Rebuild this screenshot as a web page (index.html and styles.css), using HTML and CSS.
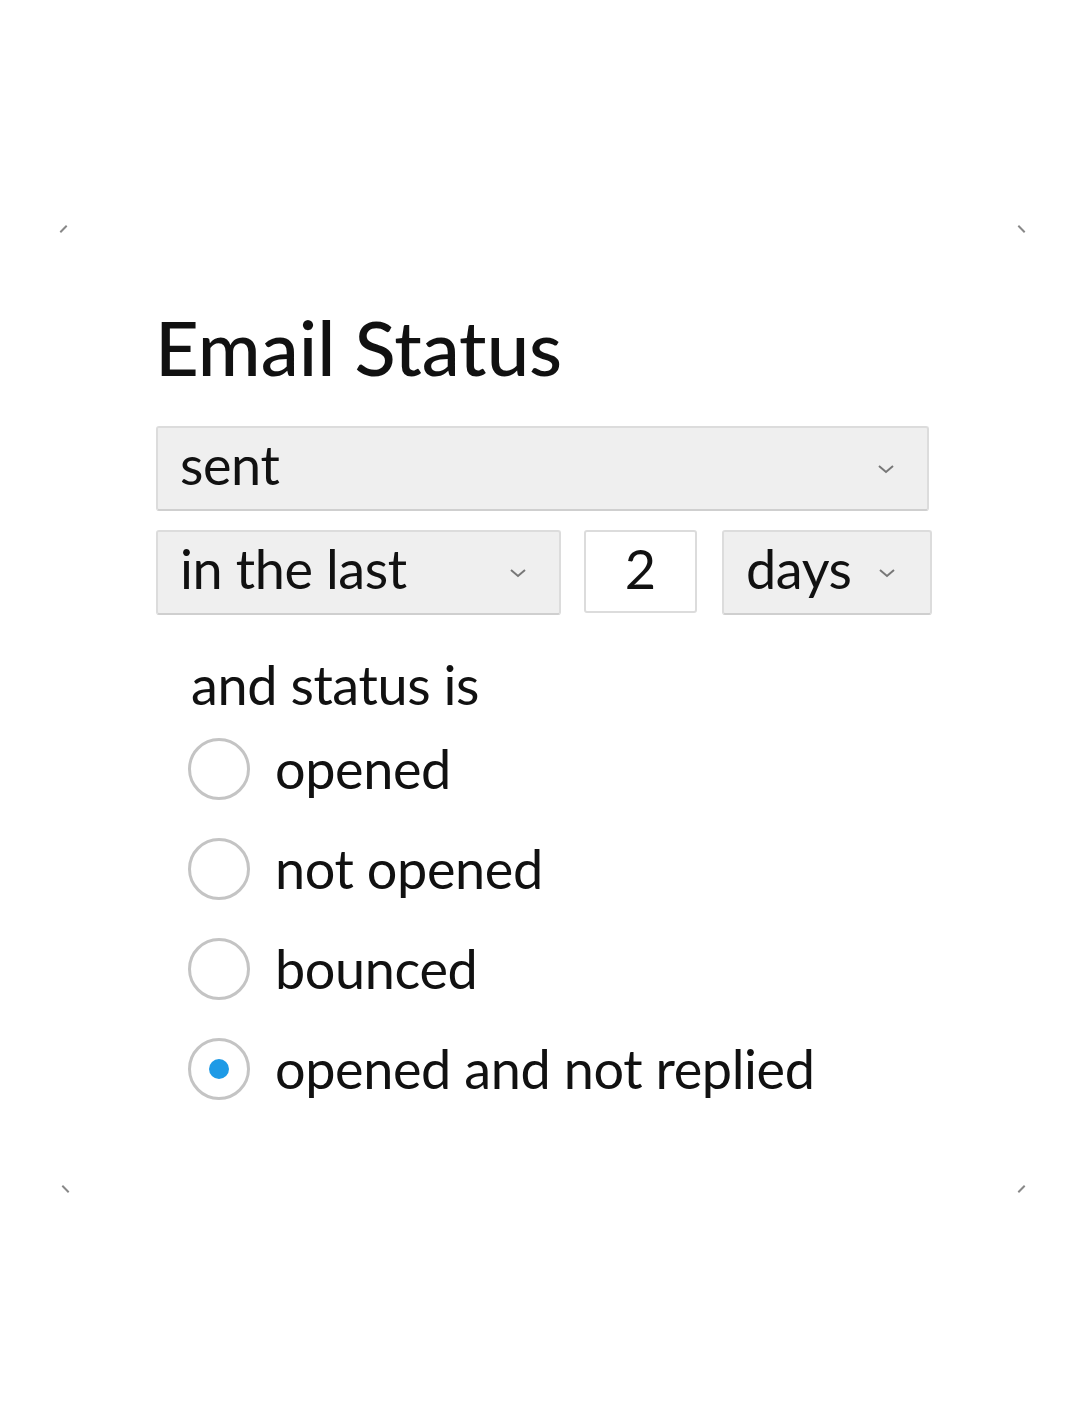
FILE: index.html
```html
<!DOCTYPE html>
<html lang="en">
<head>
  <meta charset="UTF-8">
  <title>Email Status</title>
  <link rel="stylesheet" href="styles.css">
</head>
<body>
  <div class="card">
    <span class="corner tl"></span>
    <span class="corner tr"></span>
    <span class="corner bl"></span>
    <span class="corner br"></span>

    <h1>Email Status</h1>

    <div class="select wide">
      <span>sent</span>
      <svg class="chev" viewBox="0 0 18 12"><path d="M2 3 L9 9 L16 3" /></svg>
    </div>

    <div class="row">
      <div class="select range">
        <span>in the last</span>
        <svg class="chev" viewBox="0 0 18 12"><path d="M2 3 L9 9 L16 3" /></svg>
      </div>
      <div class="num">2</div>
      <div class="select unit">
        <span>days</span>
        <svg class="chev" viewBox="0 0 18 12"><path d="M2 3 L9 9 L16 3" /></svg>
      </div>
    </div>

    <p class="label">and status is</p>

    <div class="options">
      <label class="option"><span class="radio"></span>opened</label>
      <label class="option"><span class="radio"></span>not opened</label>
      <label class="option"><span class="radio"></span>bounced</label>
      <label class="option"><span class="radio checked"></span>opened and not replied</label>
    </div>
  </div>
</body>
</html>
```

FILE: styles.css
```css
body {
  margin: 0;
  background: #fff;
  font-family: Lato, "Open Sans", sans-serif;
  color: #111;
}

.card {
  position: relative;
  box-sizing: border-box;
  width: 968px;
  height: 974px;
  margin: 222px 0 0 58px;
  padding: 89px 0 0 97px;
}

.corner {
  position: absolute;
  width: 9px;
  height: 2px;
  background: #888;
}

.corner.tl { left: 1px; top: 6px; transform: rotate(-45deg); }
.corner.tr { right: 0; top: 6px; transform: rotate(45deg); }
.corner.bl { left: 3px; bottom: 6px; transform: rotate(45deg); }
.corner.br { right: 0; bottom: 6px; transform: rotate(-45deg); }

h1 {
  margin: 0 0 43px;
  font-size: 76px;
  font-weight: 500;
  line-height: 72px;
  letter-spacing: 0;
}

.select {
  box-sizing: border-box;
  display: flex;
  align-items: center;
  justify-content: space-between;
  height: 85px;
  padding: 0 32px 8px 22px;
  background: #efefef;
  border: 2px solid #dcdcdc;
  border-bottom-color: #cfcfcf;
  border-radius: 3px;
  font-size: 54px;
  letter-spacing: -0.4px;
}

.select .chev {
  margin-top: 8px;
}

.wide {
  width: 773px;
  margin-left: 1px;
}

.chev {
  width: 18px;
  height: 12px;
  fill: none;
  stroke: #777;
  stroke-width: 2;
}

.row {
  display: flex;
  gap: 23px;
  margin-top: 19px;
  margin-left: 1px;
}

.range {
  width: 405px;
}

.num {
  box-sizing: border-box;
  width: 113px;
  height: 83px;
  display: flex;
  align-items: center;
  justify-content: center;
  padding-bottom: 6px;
  background: #fff;
  border: 2px solid #dcdcdc;
  border-radius: 3px;
  font-size: 54px;
}

.unit {
  width: 210px;
  margin-left: 2px;
  padding: 0 34px 8px 22px;
}

.label {
  margin: 40px 0 0 36px;
  font-size: 54px;
  line-height: 60px;
  letter-spacing: -0.4px;
}

.options {
  display: flex;
  flex-direction: column;
  gap: 38px;
  margin: 23px 0 0 33px;
}

.option {
  display: flex;
  align-items: center;
  gap: 25px;
  font-size: 54px;
  line-height: 62px;
  letter-spacing: -0.4px;
}

.radio {
  box-sizing: border-box;
  width: 62px;
  height: 62px;
  border: 3px solid #c4c4c4;
  border-radius: 50%;
  display: flex;
  align-items: center;
  justify-content: center;
}

.radio.checked::after {
  content: "";
  width: 20px;
  height: 20px;
  border-radius: 50%;
  background: #1e9ae6;
}
```
